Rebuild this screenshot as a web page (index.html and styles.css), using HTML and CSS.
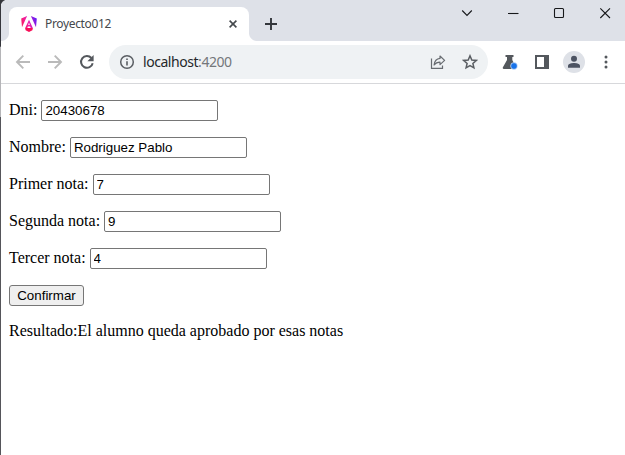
FILE: index.html
```html
<!DOCTYPE html>
<html lang="es">
<head>
<meta charset="utf-8">
<title>Proyecto012</title>
<link rel="stylesheet" href="styles.css">
</head>
<body>
<div class="window">
  <header class="tabstrip">
    <div class="tab">
      <svg class="logo" width="16" height="16" viewBox="0 0 16 16">
        <defs><linearGradient id="g" gradientUnits="userSpaceOnUse" x1="1" y1="10" x2="15" y2="4"><stop offset="0" stop-color="#f8205c"/><stop offset=".45" stop-color="#f01ca8"/><stop offset="1" stop-color="#6a1cf5"/></linearGradient></defs>
        <path fill="url(#g)" d="M9.900 0 15.800 2.500 15 11.300zM6.100 0 1 11.300.2 2.500zM8 3.700 11.800 12H9.700L9.100 10.500H6.900L6.300 12H4.200zM8 6.500 7.200 8.900H8.800z"/>
        <path fill="#f81058" d="M4.100 12H11.900L11.400 14.200 8 16 4.600 14.200z"/>
      </svg>
      <span class="tab-title">Proyecto012</span>
      <svg class="tab-close" width="8" height="8" viewBox="0 0 8 8"><path d="M.6.6 7.400 7.400M7.400.6.6 7.400" stroke="#45494d" stroke-width="1.600"/></svg>
    </div>
    <svg class="plus" width="12" height="12" viewBox="0 0 12 12"><path d="M6 0V12M0 6H12" stroke="#33363b" stroke-width="1.900"/></svg>
    <div class="controls">
      <svg width="12" height="12" viewBox="0 0 12 12"><path d="M1.200 3.500 6 8.500 10.800 3.500"/></svg>
      <svg width="12" height="12" viewBox="0 0 12 12"><path d="M1 6.500H11.500"/></svg>
      <svg width="12" height="12" viewBox="0 0 12 12"><rect x="1.500" y="1.500" width="9" height="9" rx="1"/></svg>
      <svg width="12" height="12" viewBox="0 0 12 12"><path d="M1.300 1.300 11 11M11 1.300 1.300 11"/></svg>
    </div>
  </header>
  <nav class="toolbar">
    <svg width="16" height="16" viewBox="0 0 16 16"><path d="M15 8H2M8.300 1.700 2 8 8.300 14.300" fill="none" stroke="#bababa" stroke-width="1.900"/></svg>
    <svg width="16" height="16" viewBox="0 0 16 16"><path d="M1 8H14M7.700 1.700 14 8 7.700 14.300" fill="none" stroke="#bababa" stroke-width="1.900"/></svg>
    <svg width="16" height="16" viewBox="0 0 16 16"><path d="M13.700 9.200A5.900 5.900 0 1 1 12.400 4" fill="none" stroke="#54585d" stroke-width="2"/><path d="M14.600 1V7.200H8.400z" fill="#54585d"/></svg>
    <div class="omnibox">
      <svg width="16" height="16" viewBox="0 0 16 16"><circle cx="8" cy="8" r="6.300" fill="none" stroke="#5a5e63" stroke-width="1.500"/><path d="M8 7.200V11.500M8 4.500V6" stroke="#5a5e63" stroke-width="1.600"/></svg>
      <span class="url">localhost<span class="port">:4200</span></span>
      <svg class="share" width="16" height="16" viewBox="0 0 16 16"><path d="M1.500 4.500V14.300H12.500V11.500" fill="none" stroke="#686c71" stroke-width="1.200"/><path d="M10 2 14.600 6.400 10 10.600V8.200C7.200 8.200 5.600 9 4.100 11 4.500 7.500 6.300 4.800 10 4.400z" fill="none" stroke="#686c71" stroke-width="1.200" stroke-linejoin="round"/></svg>
      <svg class="star" width="16" height="16" viewBox="0 0 16 16"><path d="M8 1.800 9.800 6 14.300 6.400 10.900 9.400 11.900 13.800 8 11.500 4.100 13.800 5.100 9.400 1.700 6.400 6.200 6z" fill="none" stroke="#5a5e63" stroke-width="1.500"/></svg>
    </div>
    <svg class="flask" width="16" height="16" viewBox="0 0 16 16"><path d="M3.500 1H11.500V3H10.300V6L14 13.200Q14.500 15 13 15H2Q.2 15 .9 13.200L5 6V3H3.500z" fill="#54585d"/><circle cx="12" cy="12" r="3.400" fill="#1a73e8" stroke="#fff" stroke-width=".6"/></svg>
    <svg class="panel" width="16" height="16" viewBox="0 0 16 16"><path d="M1 1H15V15H1zM3 3V13H10V3z" fill="#54585d" fill-rule="evenodd"/></svg>
    <svg class="avatar" width="22" height="22" viewBox="0 0 22 22"><circle cx="11" cy="11" r="11" fill="#dee1e7"/><circle cx="11" cy="7.800" r="3" fill="#4c5362"/><path d="M5 16.800V15C5 12.600 8.500 11.900 11 11.900S17 12.600 17 15V16.800z" fill="#4c5362"/></svg>
    <svg class="menu" width="4" height="14" viewBox="0 0 4 14" fill="#54585d"><circle cx="2" cy="2" r="1.500"/><circle cx="2" cy="7" r="1.500"/><circle cx="2" cy="12" r="1.500"/></svg>
  </nav>
  <main class="page">
    <p><label>Dni: <input class="field" type="text" value="20430678"></label></p>
    <p><label>Nombre: <input class="field" type="text" value="Rodriguez Pablo"></label></p>
    <p><label>Primer nota: <input class="field" type="text" value="7"></label></p>
    <p><label>Segunda nota: <input class="field" type="text" value="9"></label></p>
    <p><label>Tercer nota: <input class="field" type="text" value="4"></label></p>
    <p><button class="confirm">Confirmar</button></p>
    <p>Resultado:El alumno queda aprobado por esas notas</p>
  </main>
</div>
</body>
</html>
```
FILE: styles.css
```css
* { box-sizing: border-box; }
body { margin: 0; background: #fff; overflow: hidden; }
svg { display: block; flex: none; }
.window {
  height: 455px;
  border-left: 1px solid;
  border-image: linear-gradient(#35363c 0, #35363c 47px, #b5b5b8 48px, #b5b5b8 117px, #55555a 118px, #55555a 100%) 1;
}
.tabstrip {
  display: flex;
  height: 41px;
  padding: 7px 0 0 8px;
  background: radial-gradient(circle at 7px 7px, transparent 7px, #35363c 8px) 0 0 / 7px 7px no-repeat, #dee1e8;
}
.tab {
  position: relative;
  display: flex;
  align-items: center;
  width: 240px;
  height: 34px;
  padding: 0 12px;
  border-radius: 8px 8px 0 0;
  background: #fff;
  font: 12px "Noto Sans", sans-serif;
  color: #45484c;
}
.tab::before,
.tab::after {
  content: "";
  position: absolute;
  bottom: 0;
  width: 8px;
  height: 8px;
}
.tab::before { left: -8px; background: radial-gradient(circle at 0 0, transparent 7.5px, #fff 8.5px); }
.tab::after { right: -8px; background: radial-gradient(circle at 100% 0, transparent 7.5px, #fff 8.5px); }
.tab-title { margin: -2px 0 0 8px; letter-spacing: -0.35px; }
.tab-close { margin-left: auto; }
.plus { margin: 11px 0 0 16px; }
.controls {
  display: flex;
  gap: 34px;
  margin-left: auto;
  padding-right: 14px;
}
.controls svg { fill: none; stroke: #17181b; stroke-width: 1.1; }
.toolbar {
  display: flex;
  align-items: center;
  height: 43px;
  padding-left: 14px;
  border-bottom: 1px solid #d7d8db;
  background: #fff;
}
.toolbar > svg + svg { margin-left: 16px; }
.omnibox {
  display: flex;
  align-items: center;
  width: 379px;
  height: 34px;
  margin-left: 14px;
  padding: 0 10px;
  border-radius: 17px;
  background: #eff2f4;
}
.url {
  margin: -1px 0 0 8px;
  font: 14px "Noto Sans", sans-serif;
  letter-spacing: -0.45px;
  color: #25272a;
}
.port { color: #74777b; }
.share { margin-left: auto; }
.star { margin-left: 16px; }
.toolbar > .flask { margin-left: 14px; }
.toolbar > .avatar { margin-left: 13px; }
.toolbar > .menu { margin-left: 19px; }
.page {
  padding: 0 8px;
  font: 16px "Liberation Serif", serif;
  color: #000;
}
p { margin: 16px 0; }
.field {
  width: 177px;
  height: 21px;
  padding: 1px 3px;
  border: 1px solid #767676;
  border-radius: 2px;
  font: 13.333px "Liberation Sans", sans-serif;
  color: #000;
}
.confirm {
  width: 75px;
  height: 21px;
  padding: 0;
  border: 1px solid #767676;
  border-radius: 3px;
  background: #efefef;
  font: 13.333px "Liberation Sans", sans-serif;
  color: #000;
}
```
